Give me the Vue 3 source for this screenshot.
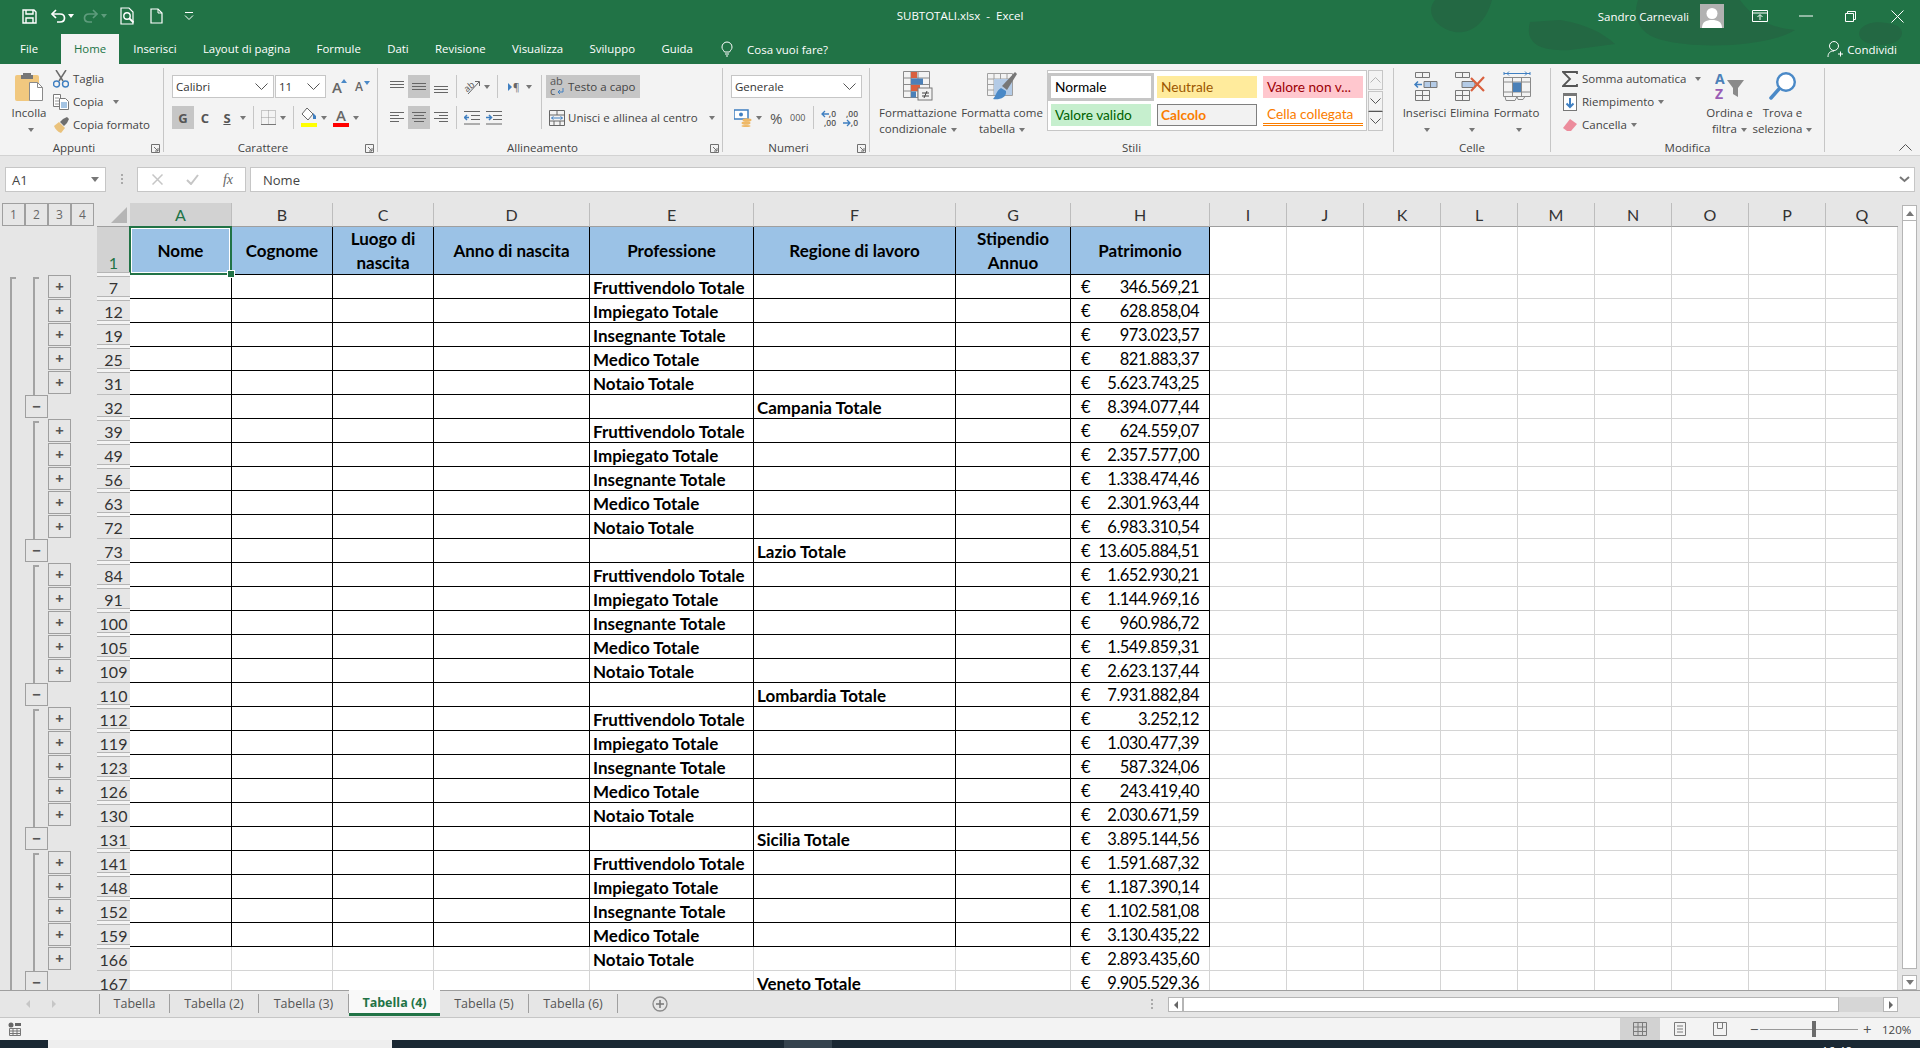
<template>
  <div class="excel">
    <div class="top">
      <svg class="title-art" width="520" height="64" viewBox="0 0 520 64">
        <path d="M35 0C25 12 35 28 55 32c15 2 30-7 37-32zM130 22c-5 18 5 30 40 28l45-6c-10-9-25-19-55-24zM238 0c-6 18 2 35 24 40 38 10 108 6 133-10-10-2-35-2-55-30zM460 30c-5 10 10 18 30 14 15-4 15-16 5-19-15-5-30-3-35 5z" fill="#236843"/>
      </svg>
      <header class="titlebar">
        <div class="qat">
          <svg class="qat-save" width="15" height="15" viewBox="0 0 15 15"><path d="M1 1h11l2 2v11H1z" fill="none" stroke="#fff" stroke-width="1.4"/><path d="M4 1v4h7V1M4 14V9h7v5" fill="none" stroke="#fff" stroke-width="1.4"/></svg>
          <svg class="qat-undo" width="16" height="14" viewBox="0 0 16 14"><path d="M2 5h8c6 0 6 8 0 8H7" fill="none" stroke="#fff" stroke-width="1.7"/><path d="M6 1L2 5l4 4" fill="none" stroke="#fff" stroke-width="1.7"/></svg>
          <i class="caret light"></i>
          <svg class="qat-redo" width="16" height="14" viewBox="0 0 16 14"><path d="M14 5H6c-6 0-6 8 0 8h3" fill="none" stroke="#5f9c7d" stroke-width="1.7"/><path d="M10 1l4 4-4 4" fill="none" stroke="#5f9c7d" stroke-width="1.7"/></svg>
          <i class="caret dim"></i>
          <svg class="qat-preview" width="15" height="18" viewBox="0 0 15 18"><path d="M1 1h8l4 4v12H1z" fill="none" stroke="#fff" stroke-width="1.2"/><circle cx="7" cy="9" r="3.2" fill="none" stroke="#fff" stroke-width="1.4"/><path d="M9.500 11.500l4 4" stroke="#fff" stroke-width="1.8"/></svg>
          <svg class="qat-new" width="13" height="16" viewBox="0 0 13 16"><path d="M1 1h7l4 4v10H1z" fill="none" stroke="#fff" stroke-width="1.2"/><path d="M8 1v4h4" fill="none" stroke="#fff"/></svg>
          <svg class="qat-more" width="10" height="10" viewBox="0 0 10 10"><path d="M1 1.500h8" stroke="#fff"/><path d="M1 4.500l4 4 4-4" fill="none" stroke="#fff"/></svg>
        </div>
        <div class="doc-title">SUBTOTALI.xlsx&nbsp; -&nbsp; Excel</div>
        <div class="win-right">
          <span class="user-name">Sandro Carnevali</span>
          <svg class="avatar" width="24" height="24" viewBox="0 0 24 24"><rect width="24" height="24" fill="#b1b1b1"/><circle cx="12" cy="9.500" r="5.500" fill="#fff"/><path d="M2 24c0-6 4-8 10-8s10 2 10 8z" fill="#fff"/></svg>
          <svg class="win-display" width="16" height="12" viewBox="0 0 16 12"><path d="M.5.500h15v11H.5zM.5 3h15" fill="none" stroke="#fff"/><path d="M8 10V5M5.500 7L8 4.500 10.500 7" fill="none" stroke="#fff"/></svg>
          <svg class="win-min" width="14" height="2" viewBox="0 0 14 2"><path d="M0 1h14" stroke="#fff"/></svg>
          <svg class="win-restore" width="11" height="11" viewBox="0 0 11 11"><path d="M.5 2.500h8v8h-8zM2.500 2.500v-2h8v8h-2" fill="none" stroke="#fff"/></svg>
          <svg class="win-close" width="13" height="13" viewBox="0 0 13 13"><path d="M.5.500l12 12M12.500.500l-12 12" stroke="#fff"/></svg>
        </div>
      </header>

      <nav class="tabs">
        <a v-for="tab in ribbonTabs" :key="tab" class="tab" :class="{ active: tab === 'Home' }">{{ tab }}</a>
        <svg class="bulb" width="12" height="16" viewBox="0 0 12 16"><path d="M3.500 11C2.500 9 1 8.500 1 6a5 5 0 0 1 10 0c0 2.500-1.500 3-2.500 5z" fill="none" stroke="#fff"/><path d="M4 13h4M5 15h2" stroke="#fff"/></svg>
        <span class="tell-me">Cosa vuoi fare?</span>
        <span class="share">
          <svg width="16" height="18" viewBox="0 0 16 18"><circle cx="7" cy="6" r="4.500" fill="none" stroke="#fff"/><path d="M1 17c0-4 2-6 6-6M11 14h5M13.500 11.500v5" fill="none" stroke="#fff"/></svg>
          Condividi
        </span>
      </nav>
    </div>

    <section class="ribbon">
      <!-- Appunti -->
      <div class="group g-clip">
        <div class="group-body clip-body">
          <div class="big-btn paste-btn">
            <svg class="big-icon" width="28" height="30" viewBox="0 0 28 30"><rect x="0" y="4" width="24" height="26" rx="2" fill="#f1c87f"/><path d="M8 4V2h8v2h2v4H6V4z" fill="#777"/><path d="M14.500 11.500h8l5 5v13h-13z" fill="#fff" stroke="#8a8a8a"/><path d="M22.500 11.500v5h5" fill="none" stroke="#8a8a8a"/></svg>
            <span>Incolla</span>
            <span><i class="caret"></i></span>
          </div>
          <div class="small-list">
            <div class="small-row">
              <svg width="16" height="18" viewBox="0 0 16 18"><path d="M3 0l7 11M13 0L6 11" stroke="#6b6b6b" stroke-width="1.500"/><circle cx="3.500" cy="14" r="3" fill="none" stroke="#3f7fc1" stroke-width="1.400"/><circle cx="12.500" cy="14" r="3" fill="none" stroke="#3f7fc1" stroke-width="1.400"/></svg>
              Taglia
            </div>
            <div class="small-row">
              <svg width="16" height="16" viewBox="0 0 16 16"><path d="M.5.500h7v12h-7z" fill="#fff" stroke="#7a7a7a"/><path d="M2 4h4M2 7h4M2 10h4" stroke="#999"/><path d="M6.500 4.500h6l3 3v8h-9z" fill="#fff" stroke="#7a7a7a"/><path d="M8 9h6M8 11h6M8 13h6" stroke="#4a89c7"/></svg>
              Copia <i class="caret wide"></i>
            </div>
            <div class="small-row">
              <svg width="16" height="16" viewBox="0 0 16 16"><path d="M1 9l5-4 6 6-4 5C5 15 2 12 1 9z" fill="#eac27c"/><path d="M7 5l3-3 4-2 2 2-2 4-3 3z" fill="#6f6f6f"/></svg>
              Copia formato
            </div>
          </div>
        </div>
        <div class="group-label">Appunti</div>
        <svg class="launcher" width="9" height="9" viewBox="0 0 9 9"><path d="M.5 8.500v-8h8v8zM3 3l4 4M7 4v3H4" fill="none" stroke="#707070"/></svg>
      </div>

      <!-- Carattere -->
      <div class="group g-font">
        <div class="group-body stack">
          <div class="tool-row">
            <div class="combo font-name">Calibri<svg class="chev" width="13" height="7" viewBox="0 0 13 7"><path d="M.5.500l6 6 6-6" fill="none" stroke="#555"/></svg></div>
            <div class="combo font-size">11<svg class="chev" width="13" height="7" viewBox="0 0 13 7"><path d="M.5.500l6 6 6-6" fill="none" stroke="#555"/></svg></div>
            <span class="grow-a big-a">A<i class="tri up"></i></span>
            <span class="grow-a small-a">A<i class="tri down"></i></span>
          </div>
          <div class="tool-row">
            <span class="btn btn-22 pressed strong">G</span>
            <span class="btn btn-22 strong">C</span>
            <span class="btn btn-22 strong under">S</span>
            <i class="caret tight"></i>
            <i class="sep"></i>
            <svg width="15" height="15" viewBox="0 0 15 15"><path d="M.5.500h14v14H.5zM7.500.500v14M.5 7.500h14" fill="none" stroke="#9a9a9a" stroke-dasharray="1 1"/><path d="M0 14.500h15" stroke="#777"/></svg>
            <i class="caret"></i>
            <i class="sep"></i>
            <svg width="16" height="19" viewBox="0 0 16 19"><path d="M6 0l6 6-5 6-6-6z" fill="#fff" stroke="#666"/><path d="M12 5l3 3v3h-3z" fill="#3f7fc1"/><rect y="15" width="16" height="4" fill="#ffff00"/></svg>
            <i class="caret"></i>
            <span class="font-color">A</span>
            <i class="caret"></i>
          </div>
        </div>
        <div class="group-label">Carattere</div>
        <svg class="launcher" width="9" height="9" viewBox="0 0 9 9"><path d="M.5 8.500v-8h8v8zM3 3l4 4M7 4v3H4" fill="none" stroke="#707070"/></svg>
      </div>

      <!-- Allineamento -->
      <div class="group g-align">
        <div class="group-body align-body">
          <div class="stack align-left">
            <div class="tool-row">
              <span class="btn btn-22"><svg width="14" height="14" viewBox="0 0 14 14"><path d="M0 1.500h14M0 4.500h14M0 7.500h14" stroke="#666"/></svg></span>
              <span class="btn btn-22 pressed"><svg width="14" height="14" viewBox="0 0 14 14"><path d="M0 3.500h14M0 6.500h14M0 9.500h14" stroke="#666"/></svg></span>
              <span class="btn btn-22"><svg width="14" height="14" viewBox="0 0 14 14"><path d="M0 6.500h14M0 9.500h14M0 12.500h14" stroke="#666"/></svg></span>
              <i class="sep narrow"></i>
              <svg class="orient" width="16" height="16" viewBox="0 0 16 16"><text x="0" y="11" font-size="9" transform="rotate(-40 5 8)" fill="#555" font-family="Open Sans, sans-serif">ab</text><path d="M4 15L15 3M11 2.500h4.500V7" fill="none" stroke="#666"/></svg>
              <i class="caret"></i>
              <i class="sep"></i>
              <svg class="dir-icon" width="12" height="14" viewBox="0 0 12 14"><path d="M0 3l4 4-4 4z" fill="#3f7fc1"/><text x="5" y="11" font-size="10" fill="#666" font-family="Open Sans, sans-serif">¶</text></svg>
              <i class="caret dir-caret"></i>
            </div>
            <div class="tool-row">
              <span class="btn btn-22"><svg width="14" height="14" viewBox="0 0 14 14"><path d="M0 1.500h14M0 4.500h9M0 7.500h14M0 10.500h9" stroke="#666"/></svg></span>
              <span class="btn btn-22 pressed"><svg width="14" height="14" viewBox="0 0 14 14"><path d="M0 1.500h14M2 4.500h10M0 7.500h14M2 10.500h10" stroke="#666"/></svg></span>
              <span class="btn btn-22"><svg width="14" height="14" viewBox="0 0 14 14"><path d="M0 1.500h14M5 4.500h9M0 7.500h14M5 10.500h9" stroke="#666"/></svg></span>
              <i class="sep narrow"></i>
              <svg width="16" height="14" viewBox="0 0 16 14"><path d="M0 .5h16M7 4.500h9M7 8.500h9M0 13h16" stroke="#666"/><path d="M0 6.500h5M3 4L.5 6.500 3 9" fill="none" stroke="#3f7fc1" stroke-width="1.500"/></svg>
              <svg class="indent-in" width="16" height="14" viewBox="0 0 16 14"><path d="M0 .5h16M7 4.500h9M7 8.500h9M0 13h16" stroke="#666"/><path d="M0 6.500h5M3 4l2.500 2.500L3 9" fill="none" stroke="#3f7fc1" stroke-width="1.500"/></svg>
            </div>
          </div>
          <i class="sep tall"></i>
          <div class="stack align-right">
            <div class="wrap-btn pressed">
              <svg class="wrap-icon" width="16" height="21" viewBox="0 0 16 21"><text x="1" y="9" font-size="11" fill="#555" font-family="Open Sans, sans-serif">ab</text><text x="1" y="19" font-size="11" fill="#555" font-family="Open Sans, sans-serif">c</text><path d="M14 12v4H9M11 14l-2 2 2 2" fill="none" stroke="#3f7fc1"/></svg>
              Testo a capo
            </div>
            <div class="wrap-btn">
              <svg width="16" height="16" viewBox="0 0 16 16"><path d="M.5.500h15v15H.5zM.5 5h15M.5 11h15M8 .5V5M5 11v4.500M11 11v4.500" fill="none" stroke="#666"/><path d="M2.500 8h11M4.500 6.500L2.500 8l2 1.500M11.500 6.500l2 1.500-2 1.500" fill="none" stroke="#3f7fc1"/></svg>
              Unisci e allinea al centro
              <i class="caret merge-caret"></i>
            </div>
          </div>
        </div>
        <div class="group-label">Allineamento</div>
        <svg class="launcher" width="9" height="9" viewBox="0 0 9 9"><path d="M.5 8.500v-8h8v8zM3 3l4 4M7 4v3H4" fill="none" stroke="#707070"/></svg>
      </div>

      <!-- Numeri -->
      <div class="group g-num">
        <div class="group-body stack">
          <div class="tool-row">
            <div class="combo num-format">Generale<svg class="chev" width="13" height="7" viewBox="0 0 13 7"><path d="M.5.500l6 6 6-6" fill="none" stroke="#555"/></svg></div>
          </div>
          <div class="tool-row num-tools">
            <svg width="18" height="18" viewBox="0 0 18 18"><rect x="0" y="1" width="14" height="9" fill="#fff" stroke="#3f7fc1" stroke-width="1.500"/><circle cx="7" cy="5.500" r="2" fill="#3f7fc1"/><ellipse cx="13" cy="11" rx="4.500" ry="1.800" fill="#eeb866"/><ellipse cx="12" cy="14" rx="4.500" ry="1.800" fill="#eeb866"/><ellipse cx="12" cy="17" rx="4.500" ry="1" fill="#eeb866"/></svg>
            <i class="caret"></i>
            <span class="percent">%</span>
            <span class="thousand">000</span>
            <i class="sep"></i>
            <span class="dec"><svg width="8" height="8" viewBox="0 0 8 8"><path d="M8 4H1M4 1L1 4l3 3" fill="none" stroke="#3f7fc1" stroke-width="1.300"/></svg><b>,0</b><b class="d2">,00</b></span>
            <span class="dec d-right"><b>,00</b><svg width="8" height="8" viewBox="0 0 8 8"><path d="M0 4h7M4 1l3 3-3 3" fill="none" stroke="#3f7fc1" stroke-width="1.300"/></svg><b class="d2">,0</b></span>
          </div>
        </div>
        <div class="group-label">Numeri</div>
        <svg class="launcher" width="9" height="9" viewBox="0 0 9 9"><path d="M.5 8.500v-8h8v8zM3 3l4 4M7 4v3H4" fill="none" stroke="#707070"/></svg>
      </div>

      <!-- Stili -->
      <div class="group g-styles">
        <div class="group-body styles-body">
          <div class="big-btn cf-btn">
            <svg class="big-icon" width="30" height="30" viewBox="0 0 30 30"><path d="M.5.500h26v26H.5zM.5 7h26M.5 13.500h26M.5 20h26M8 .5v26M15 .5v26" fill="none" stroke="#8a8a8a"/><rect x="8" y="1" width="6" height="6" fill="#d9603e"/><rect x="8" y="7.500" width="12" height="6" fill="#4a80b8"/><rect x="8" y="14" width="9" height="6" fill="#d9603e"/><rect x="8" y="20.500" width="5" height="6" fill="#4a80b8"/><rect x="15" y="17" width="14" height="12" fill="#f3f3f3" stroke="#777"/><path d="M19 22h7M19 25h7M24 20l-3 7" stroke="#444"/></svg>
            <span>Formattazione</span>
            <span>condizionale<i class="caret"></i></span>
          </div>
          <div class="big-btn table-btn">
            <svg class="big-icon" width="30" height="30" viewBox="0 0 30 30"><path d="M.5 2.500h25v22H.5zM.5 8h25M.5 13.500h25M.5 19h25M7 2.500v22M13.500 2.500v22M20 2.500v22" fill="none" stroke="#a0a0a0"/><rect x="7" y="8" width="18" height="16" fill="#b4cbe6"/><path d="M30 3l-2-2-13 14 5 4z" fill="#777"/><path d="M14 17c-5 3-5 8-8 11 6 1 14-1 13-8z" fill="#4a89c7"/></svg>
            <span>Formatta come</span>
            <span>tabella<i class="caret"></i></span>
          </div>
          <div class="gallery">
            <div class="style-grid">
              <div class="style-cell s-normal">Normale</div>
              <div class="style-cell s-neutral">Neutrale</div>
              <div class="style-cell s-bad">Valore non v...</div>
              <div class="style-cell s-good">Valore valido</div>
              <div class="style-cell s-calc">Calcolo</div>
              <div class="style-cell s-linked">Cella collegata</div>
            </div>
          </div>
          <div class="gallery-scroll">
            <span class="g-btn"><svg width="11" height="6" viewBox="0 0 11 6"><path d="M.5 5.500l5-5 5 5" fill="none" stroke="#b5b5b5"/></svg></span>
            <span class="g-btn"><svg width="11" height="6" viewBox="0 0 11 6"><path d="M.5.500l5 5 5-5" fill="none" stroke="#555"/></svg></span>
            <span class="g-btn more"><svg width="11" height="6" viewBox="0 0 11 6"><path d="M.5.500l5 5 5-5" fill="none" stroke="#555"/></svg></span>
          </div>
        </div>
        <div class="group-label">Stili</div>
      </div>

      <!-- Celle -->
      <div class="group g-cells">
        <div class="group-body cells-body">
          <div class="big-btn cell-btn">
            <svg class="big-icon" width="26" height="30" viewBox="0 0 26 30"><path d="M3.500 1.500h14v5h-14zM10.500 1.500v5M3.500 19.500h14v10h-14zM3.500 24.500h14M10.500 19.500v10" fill="none" stroke="#777"/><path d="M12 10.500h13v6H12z" fill="#b4cbe6" stroke="#777"/><path d="M18.500 10.500v6" stroke="#777"/><path d="M3 13.500h7M6 10.500l-3 3 3 3" fill="none" stroke="#3f7fc1" stroke-width="1.500"/></svg>
            <span>Inserisci</span>
            <span><i class="caret"></i></span>
          </div>
          <div class="big-btn cell-btn">
            <svg class="big-icon" width="30" height="30" viewBox="0 0 30 30"><path d="M.5 1.500h14v5H.5zM7.500 1.500v5M.5 19.500h14v10H.5zM.5 24.500h14M7.500 19.500v10" fill="none" stroke="#777"/><path d="M7 10.500h13v6H7z" fill="#b4cbe6" stroke="#777"/><path d="M16 7l13 13M29 6L16 20" stroke="#d9603e" stroke-width="2.200"/></svg>
            <span>Elimina</span>
            <span><i class="caret"></i></span>
          </div>
          <div class="big-btn cell-btn wide">
            <svg class="big-icon" width="28" height="30" viewBox="0 0 28 30"><path d="M1 2.500h26M1 1v3M27 1v3M4 2.500l2-2M4 2.500l2 2M24 2.500l-2-2M24 2.500l-2 2" fill="none" stroke="#3f7fc1"/><path d="M.5 6.500h27v19H.5zM.5 11h27M.5 21h27M9.500 6.500v19M18.500 6.500v19" fill="none" stroke="#8a8a8a"/><rect x="10" y="11.500" width="8" height="9.500" fill="#4a80b8"/><path d="M2 25.500l1 4h9l2-4M14 25.500l1 3h5l2-3" fill="none" stroke="#8a8a8a"/></svg>
            <span>Formato</span>
            <span><i class="caret"></i></span>
          </div>
        </div>
        <div class="group-label">Celle</div>
      </div>

      <!-- Modifica -->
      <div class="group g-edit">
        <div class="group-body edit-body">
          <div class="small-list edit-list">
            <div class="small-row">
              <svg width="16" height="16" viewBox="0 0 16 16"><path d="M15 3V1H1l7 7-7 7h14v-2" fill="none" stroke="#555" stroke-width="1.800"/></svg>
              Somma automatica <i class="caret sum-caret"></i>
            </div>
            <div class="small-row">
              <svg width="14" height="18" viewBox="0 0 14 18"><rect x=".5" y=".5" width="13" height="17" fill="#fff" stroke="#777"/><rect width="14" height="3" fill="#777"/><path d="M7 5v9M3.500 10.500L7 14l3.500-3.500" fill="none" stroke="#3f7fc1" stroke-width="2"/></svg>
              Riempimento<i class="caret"></i>
            </div>
            <div class="small-row">
              <svg width="16" height="14" viewBox="0 0 16 14"><path d="M8 1l7 5-6 7H5L1 10z" fill="#ec8c9c"/></svg>
              Cancella<i class="caret"></i>
            </div>
          </div>
          <div class="big-btn sort-btn">
            <svg class="big-icon" width="30" height="30" viewBox="0 0 30 30"><text x="0" y="13" font-size="14" font-weight="700" fill="#4a80b8" font-family="Open Sans, sans-serif">A</text><text x="0" y="28" font-size="14" font-weight="700" fill="#9a5db5" font-family="Open Sans, sans-serif">Z</text><path d="M12 9h17l-6 8v9l-5-3v-6z" fill="#8a8a8a"/></svg>
            <span>Ordina e</span>
            <span>filtra<i class="caret"></i></span>
          </div>
          <div class="big-btn find-btn">
            <svg class="big-icon" width="28" height="30" viewBox="0 0 28 30"><circle cx="17" cy="11" r="8.800" fill="#fff" stroke="#4a89c7" stroke-width="2.400"/><path d="M10 18L2 27" stroke="#4a89c7" stroke-width="3.500" stroke-linecap="round"/></svg>
            <span>Trova e</span>
            <span>seleziona<i class="caret"></i></span>
          </div>
        </div>
        <div class="group-label">Modifica</div>
      </div>

      <svg class="collapse" width="13" height="7" viewBox="0 0 13 7"><path d="M.5 6.500l6-6 6 6" fill="none" stroke="#555"/></svg>
    </section>

    <section class="formula-bar">
      <div class="name-box">A1<i class="caret big"></i></div>
      <span class="fx-dots"></span>
      <div class="fx-buttons">
        <svg width="11" height="11" viewBox="0 0 11 11"><path d="M.5.500l10 10M10.500.500l-10 10" stroke="#c6c6c6" stroke-width="1.500"/></svg>
        <svg width="13" height="11" viewBox="0 0 13 11"><path d="M1 6l4 4 7-9" fill="none" stroke="#c6c6c6" stroke-width="2"/></svg>
        <span class="fx-label">fx</span>
      </div>
      <div class="fx-input">
        Nome
        <svg width="11" height="7" viewBox="0 0 11 7"><path d="M1 1l4.500 4L10 1" fill="none" stroke="#777" stroke-width="2"/></svg>
      </div>
    </section>

    <section class="sheet">
      <div class="grid">
        <div class="sheet-row col-heads">
          <div class="outline levels"><span v-for="n in 4" :key="n" class="level">{{ n }}</span></div>
          <div class="corner"><svg width="16" height="16" viewBox="0 0 16 16"><path d="M16 0v16H0z" fill="#b5b5b5"/></svg></div>
          <div v-for="col in columns" :key="col" class="col-head" :class="{ selected: col === 'A' }">{{ col }}</div>
        </div>

        <div class="sheet-row header-row">
          <div class="outline"></div>
          <div class="row-head selected gap">1</div>
          <div v-for="(title, i) in headers" :key="i" class="cell boxed head">
            {{ title }}
            <template v-if="i === 0"><span class="selection"></span><span class="handle"></span></template>
          </div>
          <div v-for="n in 9" :key="n" class="cell"></div>
        </div>

        <div v-for="row in rows" :key="row.num" class="sheet-row">
          <div class="outline">
            <i class="line-outer" :class="{ first: row.num === 7 }"></i>
            <template v-if="row.total">
              <span class="fold minus">−</span>
            </template>
            <template v-else>
              <i class="line-inner" :class="{ first: row.first }"></i>
              <span class="fold plus">+</span>
            </template>
          </div>
          <div class="row-head" :class="{ gap: row.gap }">{{ row.num }}</div>
          <div v-for="n in 4" :key="n" class="cell" :class="{ boxed: row.boxed }"></div>
          <div class="cell strong-cell" :class="{ boxed: row.boxed }">{{ row.job }}</div>
          <div class="cell strong-cell" :class="{ boxed: row.boxed }">{{ row.region }}</div>
          <div class="cell" :class="{ boxed: row.boxed }"></div>
          <div class="cell money" :class="{ boxed: row.boxed }"><span>€</span><span>{{ row.value }}</span></div>
          <div v-for="n in 9" :key="n" class="cell"></div>
        </div>
      </div>
      <div class="vscroll">
        <span class="sb-btn"><i class="tri up dark"></i></span>
        <span class="sb-thumb"></span>
        <span class="sb-btn end"><i class="tri down dark"></i></span>
      </div>
    </section>

    <section class="sheet-tabs">
      <div class="tab-nav">
        <i class="nav-arrow left"></i>
        <i class="nav-arrow right"></i>
      </div>
      <div v-for="sheet in sheets" :key="sheet" class="sheet-tab" :class="{ current: sheet === 'Tabella (4)' }"><span>{{ sheet }}</span></div>
      <svg class="add-sheet" width="16" height="16" viewBox="0 0 16 16"><circle cx="8" cy="8" r="7" fill="none" stroke="#8a8a8a" stroke-width="1.300"/><path d="M8 4v8M4 8h8" stroke="#777" stroke-width="1.500"/></svg>
      <span class="tab-dots"></span>
      <div class="hscroll">
        <span class="hs-btn"><i class="nav-arrow left dark"></i></span>
        <span class="hs-thumb"></span>
        <span class="hs-track"></span>
        <span class="hs-btn end"><i class="nav-arrow right dark"></i></span>
      </div>
    </section>

    <footer class="status">
      <svg class="macro" width="14" height="14" viewBox="0 0 14 14"><circle cx="3" cy="3" r="2.500" fill="#666"/><rect x="7" y="1" width="6" height="3" fill="#666"/><path d="M1.500 6.500h11v7h-11zM1.500 9h11M1.500 11.500h11M5 6.500v7M9 6.500v7" fill="none" stroke="#777"/></svg>
      <div class="status-right">
        <span class="view on"><svg width="14" height="14" viewBox="0 0 14 14"><path d="M.5.500h13v13H.5zM.5 5h13M.5 9.500h13M5 .5v13M9.500.5v13" fill="none" stroke="#7a7a7a"/></svg></span>
        <span class="view"><svg width="12" height="14" viewBox="0 0 12 14"><path d="M.5.500h11v13H.5zM3 4h6M3 7h6M3 10h6" fill="none" stroke="#7a7a7a"/></svg></span>
        <span class="view"><svg width="14" height="14" viewBox="0 0 14 14"><path d="M.5.500h13v13H.5zM4.500.500v6h5v-6" fill="none" stroke="#7a7a7a"/></svg></span>
        <span class="zoom-minus">−</span>
        <span class="slider"><i></i></span>
        <span class="zoom-plus">+</span>
        <span class="zoom-value">120%</span>
      </div>
    </footer>

    <div class="taskbar">
      <span class="search"></span>
      <span class="active-app"></span>
      <span class="clock">16:48</span>
    </div>
  </div>
</template>

<script setup>
const ribbonTabs = ['File', 'Home', 'Inserisci', 'Layout di pagina', 'Formule', 'Dati', 'Revisione', 'Visualizza', 'Sviluppo', 'Guida']
const columns = 'ABCDEFGHIJKLMNOPQ'.split('')
const headers = ['Nome', 'Cognome', 'Luogo di nascita', 'Anno di nascita', 'Professione', 'Regione di lavoro', 'Stipendio Annuo', 'Patrimonio']
const sheets = ['Tabella', 'Tabella (2)', 'Tabella (3)', 'Tabella (4)', 'Tabella (5)', 'Tabella (6)']
const jobs = ['Fruttivendolo Totale', 'Impiegato Totale', 'Insegnante Totale', 'Medico Totale', 'Notaio Totale']

const regions = [
  ['Campania Totale', [7, '346.569,21'], [12, '628.858,04'], [19, '973.023,57'], [25, '821.883,37'], [31, '5.623.743,25'], [32, '8.394.077,44']],
  ['Lazio Totale', [39, '624.559,07'], [49, '2.357.577,00'], [56, '1.338.474,46'], [63, '2.301.963,44'], [72, '6.983.310,54'], [73, '13.605.884,51']],
  ['Lombardia Totale', [84, '1.652.930,21'], [91, '1.144.969,16'], [100, '960.986,72'], [105, '1.549.859,31'], [109, '2.623.137,44'], [110, '7.931.882,84']],
  ['Sicilia Totale', [112, '3.252,12'], [119, '1.030.477,39'], [123, '587.324,06'], [126, '243.419,40'], [130, '2.030.671,59'], [131, '3.895.144,56']],
  ['Veneto Totale', [141, '1.591.687,32'], [148, '1.187.390,14'], [152, '1.102.581,08'], [159, '3.130.435,22'], [166, '2.893.435,60'], [167, '9.905.529,36']],
]

const rows = regions.flatMap(([region, ...items]) =>
  items.map(([num, value], i) => ({
    num,
    value,
    job: jobs[i] || '',
    region: i === 5 ? region : '',
    total: i === 5,
    first: i === 0,
    boxed: num <= 159,
  }))
)
// the next number isn't consecutive: hidden rows leave a double line in the header
rows.forEach((row, i) => {
  const next = rows[i + 1]
  row.gap = !!next && next.num !== row.num + 1
})
</script>

<style>
html, body {
  margin: 0;
  overflow: hidden;
  background: #e6e6e6;
}
</style>

<style scoped>
.excel {
  width: 1920px;
  height: 1048px;
  overflow: hidden;
  font-family: "Open Sans", sans-serif;
  font-size: 11.5px;
  color: #444;
  display: flex;
  flex-direction: column;
}
i { font-style: normal; display: block; flex: none; }
svg { display: block; flex: none; }

.top {
  height: 64px;
  background: #217346;
  position: relative;
  flex: none;
}
.title-art { position: absolute; left: 1400px; top: 0; }
.titlebar {
  height: 34px;
  color: #fff;
  display: flex;
  position: relative;
}
.qat { display: flex; align-items: center; height: 32px; padding-left: 22px; width: 300px; }
.qat-undo { margin-left: 13px; }
.qat-redo { margin-left: 9px; }
.qat-preview { margin-left: 13px; }
.qat-new { margin-left: 15px; }
.qat-more { margin-left: 21px; }
.doc-title {
  position: absolute;
  left: 0;
  right: 0;
  top: 8px;
  text-align: center;
  line-height: 16px;
}
.win-right { margin-left: auto; display: flex; align-items: center; height: 32px; }
.user-name { margin-right: 11px; }
.win-display { margin-left: 28px; }
.win-min { margin-left: 31px; }
.win-restore { margin-left: 32px; }
.win-close { margin-left: 35px; margin-right: 16px; }

.tabs {
  height: 30px;
  color: #fff;
  display: flex;
  align-items: center;
  padding-left: 14px;
  position: relative;
}
.tab { padding: 0 13.2px; line-height: 30px; font-size: 11.4px; }
.tab:first-child { padding: 0 23px 0 6px; }
.tab.active { background: #f3f3f3; color: #217346; padding: 0 12px; width: 58px; box-sizing: border-box; text-align: center; margin-right: 1px; }
.bulb { margin-left: 15px; }
.tell-me { margin-left: 14px; }
.share { margin-left: auto; display: flex; align-items: center; gap: 4px; margin-right: 23px; }

.caret {
  width: 0;
  height: 0;
  margin-left: 4px;
  border: 3.5px solid transparent;
  border-top: 4px solid #777;
  border-bottom: 0;
  display: inline-block;
  vertical-align: middle;
}
.caret.light { border-top-color: #fff; margin-left: 2px; }
.caret.dim { border-top-color: #5f9c7d; margin-left: 2px; }
.caret.wide { margin-left: 9px; }
.caret.tight { margin-left: 2px; }
.caret.big { border-width: 4.5px; border-top-width: 5px; border-bottom-width: 0; margin-left: auto; }

.ribbon {
  height: 92px;
  box-sizing: border-box;
  padding-top: 4px;
  background: #f3f3f3;
  border-bottom: 1px solid #d2d2d2;
  display: flex;
  position: relative;
  flex: none;
}
.group {
  height: 84px;
  box-sizing: border-box;
  border-right: 1px solid #c6c6c6;
  position: relative;
  flex: none;
}
.g-clip { width: 164px; }
.g-font { width: 214px; }
.g-align { width: 345px; }
.g-num { width: 147px; }
.g-styles { width: 524px; }
.g-cells { width: 157px; }
.g-edit { width: 274px; }
.group-body { height: 72px; box-sizing: border-box; display: flex; }
.group-label { line-height: 16px; text-align: center; color: #444; font-size: 11.5px; }
.g-clip .group-label, .g-font .group-label, .g-align .group-label, .g-num .group-label { padding-right: 15px; }
.launcher { position: absolute; right: 3px; bottom: -1px; }

.big-btn {
  display: flex;
  flex-direction: column;
  align-items: center;
  padding-top: 3px;
  flex: none;
  white-space: nowrap;
}
.big-btn span { line-height: 16px; height: 16px; }
.big-icon { margin-bottom: 4px; height: 30px; }

.small-list { display: flex; flex-direction: column; margin-left: 5px; margin-top: -1px; }
.small-row { height: 23px; display: flex; align-items: center; white-space: nowrap; }
.small-row svg { width: 16px; margin-right: 4px; }

.clip-body { padding-left: 10px; }
.paste-btn { width: 38px; }

.stack { flex-direction: column; gap: 8px; padding-top: 7px; display: flex; }
.tool-row { height: 23px; display: flex; align-items: center; }
.g-font .stack { padding-left: 8px; }
.combo {
  height: 23px;
  box-sizing: border-box;
  background: #fff;
  border: 1px solid #c6c6c6;
  display: flex;
  align-items: center;
  justify-content: space-between;
  padding: 0 5px 0 3px;
  color: #333;
}
.font-name { width: 102px; }
.font-size { width: 51px; margin-left: 1px; }
.grow-a { position: relative; color: #666; font-family: "Open Sans", sans-serif; font-weight: 600; }
.big-a { font-size: 15px; margin-left: 6px; width: 14px; }
.small-a { font-size: 12px; margin-left: 9px; width: 14px; }
.tri {
  width: 0;
  height: 0;
  border: 3px solid transparent;
  border-bottom: 4px solid #4a89c7;
  border-top: 0;
  position: absolute;
  right: -1px;
  top: 2px;
}
.tri.down { border-bottom: 0; border-top: 4px solid #4a89c7; top: 3px; }
.tri.dark { position: static; border-width: 4px; border-bottom-color: #777; border-top-color: #777; }
.tri.dark.up { border-top: 0; border-bottom-width: 5px; }
.tri.dark.down { border-bottom: 0; border-top-width: 5px; }

.btn { height: 23px; display: flex; align-items: center; justify-content: center; flex: none; }
.btn-22 { width: 22px; }
.pressed { background: #c6c6c6; }
.strong { font-weight: 700; font-size: 13px; color: #555; }
.under { text-decoration: underline; }
.sep { width: 1px; height: 23px; background: #c6c6c6; margin: 0 7px; }
.sep.narrow { margin-left: 4px; }
.sep.tall { height: 54px; margin: 7px 4px 0 0; }
.font-color {
  margin-left: 6px;
  width: 16px;
  height: 19px;
  line-height: 15px;
  border-bottom: 4px solid #f00;
  box-sizing: border-box;
  text-align: center;
  font-size: 15px;
  font-weight: 600;
  color: #666;
}

.align-body { padding-left: 8px; }
.align-left { width: 155px; flex: none; }
.dir-icon { margin-left: 3px; }
.dir-caret { margin-left: 6px; }
.indent-in { margin-left: 6px; }
.align-right { width: 165px; }
.wrap-btn { height: 23px; width: 94px; display: flex; align-items: center; gap: 3px; padding-left: 3px; box-sizing: border-box; white-space: nowrap; }
.wrap-btn:last-child { width: 170px; }
.merge-caret { margin-left: 8px; }

.g-num .stack { padding-left: 8px; }
.num-format { width: 131px; }
.num-tools { padding-left: 3px; }
.percent { font-size: 15px; margin-left: 8px; width: 12px; color: #555; }
.thousand { font-size: 9px; margin-left: 8px; width: 16px; color: #555; }
.dec { width: 14px; height: 18px; position: relative; display: block; margin-left: 0; }
.dec b { position: absolute; right: -1px; top: 0; font-size: 8.5px; line-height: 9px; font-weight: 600; color: #555; }
.dec .d2 { top: 9px; }
.dec svg { position: absolute; left: 0; top: 1px; }
.d-right { margin-left: 8px; }
.d-right svg { top: 10px; left: 0; }
.num-tools .sep { margin: 0 7px; }

.styles-body { padding-left: 10px; }
.cf-btn { width: 76px; }
.table-btn { width: 82px; margin-left: 5px; }
.gallery {
  margin: 2px 0 0 4px;
  width: 320px;
  height: 61px;
  box-sizing: border-box;
  background: #fff;
  border: 1px solid #c6c6c6;
  padding: 5px 0 0 3px;
}
.style-grid { display: grid; grid-template-columns: repeat(3, 100px); grid-template-rows: 22px 22px; gap: 6px; }
.style-cell {
  font-family: Lato, sans-serif;
  font-size: 13.7px;
  line-height: 22px;
  padding-left: 4px;
  white-space: nowrap;
  box-sizing: border-box;
}
.s-normal { color: #000; outline: 3px solid #c6c6c6; }
.s-neutral { background: #ffeb9c; color: #9c5700; }
.s-bad { background: #ffc7ce; color: #9c0006; }
.s-good { background: #c6efce; color: #006100; }
.s-calc { background: #f2f2f2; color: #fa7d00; font-weight: 700; border: 1px solid #7f7f7f; line-height: 20px; padding-left: 3px; }
.s-linked { color: #fa7d00; border-bottom: 3px double #fa7d00; line-height: 20px; }
.gallery-scroll { margin: 2px 0 0 1px; width: 15px; display: flex; flex-direction: column; }
.g-btn {
  height: 20px;
  box-sizing: border-box;
  border: 1px solid #c6c6c6;
  display: flex;
  align-items: center;
  justify-content: center;
  background: #f3f3f3;
  margin-bottom: 0.5px;
}
.g-btn.more { border-top: 1px solid #555; }

.cells-body { padding-left: 8px; }
.cell-btn { width: 45px; }
.cell-btn.wide { width: 49px; }

.edit-body { padding-left: 11px; }
.edit-list { margin-left: 0; width: 141px; flex: none; }
.sum-caret { margin-left: 9px; }
.sort-btn, .find-btn { width: 53px; }

.collapse { position: absolute; right: 8px; bottom: 4px; }

.formula-bar {
  height: 47px;
  box-sizing: border-box;
  padding: 11px 5px 11px;
  background: #e6e6e6;
  display: flex;
  flex: none;
}
.name-box, .fx-buttons, .fx-input {
  height: 25px;
  box-sizing: border-box;
  background: #fff;
  border: 1px solid #c6c6c6;
  display: flex;
  align-items: center;
  font-size: 13px;
}
.name-box { width: 101px; padding: 0 6px; }
.fx-dots { width: 2px; height: 10px; margin: 7px 14px 0 15px; border-left: 2px dotted #aaa; box-sizing: border-box; }
.fx-buttons { width: 109px; justify-content: space-between; padding: 0 12px 0 14px; }
.fx-label { font-family: "Liberation Serif", serif; font-style: italic; font-size: 14px; color: #666; }
.fx-input { margin-left: 4px; flex: 1; padding: 0 4px 0 12px; justify-content: space-between; }

.sheet {
  height: 787px;
  overflow: hidden;
  display: flex;
  background: #e6e6e6;
  flex: none;
}
.grid { width: 1898px; flex: none; }
.sheet-row {
  display: grid;
  grid-template-columns: 97px 33px 102px 101px 101px 156px 164px 202px 115px 139px repeat(8, 77px) 72px;
  grid-template-rows: 24px;
  height: 24px;
  font-family: Lato, sans-serif;
}
.header-row { height: 48px; grid-template-rows: 48px; }
.outline { position: relative; }
.levels { display: flex; padding-left: 2px; box-sizing: border-box; height: 23px; font-family: "Open Sans", sans-serif; }
.level {
  width: 23px;
  box-sizing: border-box;
  border: 1px solid #9f9f9f;
  text-align: center;
  font-size: 12px;
  line-height: 21px;
  color: #666;
}
.corner { display: flex; justify-content: flex-end; padding: 4px 3px 0 0; border-bottom: 1px solid #9f9f9f; }
.col-head {
  background: #e6e6e6;
  border-right: 1px solid #bdbdbd;
  border-bottom: 1px solid #9f9f9f;
  text-align: center;
  font-size: 16px;
  line-height: 23px;
  color: #333;
}
.col-head:last-child { border-right: 0; }
.col-head.selected { background: #d2d2d2; color: #217346; }
.row-head {
  position: relative;
  text-align: center;
  font-size: 16px;
  line-height: 25px;
  color: #333;
  border-bottom: 1px solid #bdbdbd;
  box-sizing: border-box;
}
.row-head.selected { background: #d2d2d2; color: #217346; line-height: 72px; }
.row-head.gap::after {
  content: "";
  position: absolute;
  left: 0;
  right: 0;
  bottom: -3px;
  height: 3px;
  background: #f3f3f3;
  border-top: 1px solid #b5b5b5;
  border-bottom: 1px solid #b5b5b5;
  z-index: 1;
}
.cell {
  background: #fff;
  border-right: 1px solid #d4d4d4;
  border-bottom: 1px solid #d4d4d4;
  box-sizing: border-box;
  position: relative;
  color: #000;
  font-size: 16.5px;
  letter-spacing: -0.5px;
  line-height: 25px;
  white-space: nowrap;
  padding: 0 3px;
}
.cell.boxed { border-color: #000; }
.cell.head {
  background: #9bc2e6;
  white-space: normal;
  font-weight: 700;
  font-size: 17px;
  letter-spacing: 0;
  line-height: 24px;
  display: flex;
  align-items: center;
  justify-content: center;
  text-align: center;
  padding: 0 12px;
}
.strong-cell { font-weight: 700; font-size: 17px; letter-spacing: 0; }
.money { display: flex; justify-content: space-between; padding: 0 10px; }
.selection {
  position: absolute;
  left: -1px;
  top: -1px;
  right: -1px;
  bottom: -1px;
  border: 2px solid #217346;
  box-shadow: inset 0 0 0 1px #fff;
}
.handle {
  position: absolute;
  right: -4px;
  bottom: -4px;
  width: 6px;
  height: 6px;
  background: #217346;
  border: 1px solid #fff;
  z-index: 2;
}

.line-outer { position: absolute; left: 10px; top: 0; bottom: 0; width: 2px; background: #a3a3a3; }
.line-inner { position: absolute; left: 33px; top: 0; bottom: 0; width: 2px; background: #a3a3a3; }
.line-outer.first, .line-inner.first { top: 2px; }
.line-outer.first::after, .line-inner.first::after {
  content: "";
  position: absolute;
  left: 0;
  top: 0;
  width: 6px;
  height: 2px;
  background: #a3a3a3;
}
.fold {
  position: absolute;
  top: 0;
  width: 23px;
  height: 23px;
  box-sizing: border-box;
  border: 1px solid #9f9f9f;
  background: #e6e6e6;
  text-align: center;
  font-family: "Open Sans", sans-serif;
  font-weight: 700;
  font-size: 15px;
  line-height: 20px;
  color: #555;
}
.fold.plus { left: 48px; }
.fold.minus { left: 25px; }

.vscroll { margin-left: 4px; width: 15px; display: flex; flex-direction: column; padding-top: 2px; }
.sb-btn {
  height: 16px;
  background: #fff;
  border: 1px solid #b5b5b5;
  box-sizing: border-box;
  display: flex;
  align-items: center;
  justify-content: center;
  flex: none;
}
.sb-thumb { height: 748px; background: #fff; border: 1px solid #b5b5b5; border-top: 0; box-sizing: border-box; flex: none; margin-bottom: 6px; }
.sb-btn.end { height: 15px; }

.sheet-tabs {
  height: 28px;
  box-sizing: border-box;
  background: #e6e6e6;
  border-top: 1px solid #9f9f9f;
  border-bottom: 1px solid #c6c6c6;
  display: flex;
  position: relative;
  z-index: 2;
  flex: none;
}
.tab-nav { width: 100px; display: flex; padding: 6px 0 0 26px; box-sizing: border-box; gap: 22px; border-right: 1px solid #9f9f9f; height: 20px; margin-top: 3px; }
.nav-arrow {
  width: 0;
  height: 0;
  border: 4px solid transparent;
}
.nav-arrow.left { border-left: 0; border-right: 4px solid #c6c6c6; }
.nav-arrow.right { border-right: 0; border-left: 4px solid #c6c6c6; }
.nav-arrow.dark.left { border-right-color: #666; }
.nav-arrow.dark.right { border-left-color: #666; }
.sheet-tab {
  height: 26px;
  box-sizing: border-box;
  padding: 3px 0;
  display: flex;
  justify-content: center;
  text-align: center;
  font-size: 12.5px;
  color: #555;
  margin-top: -1px;
}
.sheet-tab span { display: block; width: 100%; line-height: 20px; border-right: 1px solid #9f9f9f; margin-top: 1px; }
.sheet-tab:nth-of-type(2) { width: 70px; }
.sheet-tab:nth-of-type(3) { width: 89px; }
.sheet-tab:nth-of-type(4) { width: 90px; }
.sheet-tab:nth-of-type(5) { width: 91px; padding: 0; background: #f9f9f9; border-bottom: 3px solid #217346; color: #217346; font-weight: 700; height: 26px; }
.sheet-tab:nth-of-type(5) span { border-right: 0; line-height: 22px; margin-top: 2px; }
.sheet-tab:nth-of-type(6) { width: 89px; }
.sheet-tab:nth-of-type(7) { width: 89px; }
.add-sheet { margin: 5px 0 0 34px; }
.tab-dots { margin: 8px 0 0 483px; height: 10px; border-left: 2px dotted #aaa; }
.hscroll { margin: 6px 0 0 15px; width: 730px; height: 15px; display: flex; }
.hs-btn { width: 15px; flex: none; background: #fff; border: 1px solid #b5b5b5; box-sizing: border-box; display: flex; align-items: center; justify-content: center; }
.hs-thumb { width: 656px; flex: none; background: #fff; border: 1px solid #b5b5b5; box-sizing: border-box; }
.hs-track { flex: 1; background: #d6d6d6; }

.status {
  height: 22px;
  background: #f3f3f3;
  display: flex;
  align-items: center;
  flex: none;
}
.macro { margin-left: 8px; }
.status-right { margin-left: auto; display: flex; align-items: center; height: 100%; }
.view { width: 40px; height: 100%; display: flex; align-items: center; justify-content: center; }
.view.on { background: #d2d2d2; }
.zoom-minus { margin-left: 10px; width: 10px; font-size: 15px; color: #555; }
.slider { width: 98px; height: 1px; background: #999; position: relative; }
.slider i { position: absolute; left: 52px; top: -8px; width: 4px; height: 16px; background: #6b6b6b; }
.zoom-plus { margin-left: 5px; width: 12px; font-size: 15px; color: #555; }
.zoom-value { margin: 0 6px 0 7px; font-size: 11.5px; width: 32px; white-space: nowrap; }

.taskbar {
  height: 8px;
  background: #1a2833;
  position: relative;
  overflow: hidden;
  display: flex;
  flex: none;
}
.search { margin-left: 48px; width: 344px; background: #eeeeee; }
.active-app { margin-left: 392px; width: 48px; background: #35434e; }
.clock { position: absolute; right: 68px; top: 4px; color: #fff; font-size: 12px; line-height: 16px; }
</style>
